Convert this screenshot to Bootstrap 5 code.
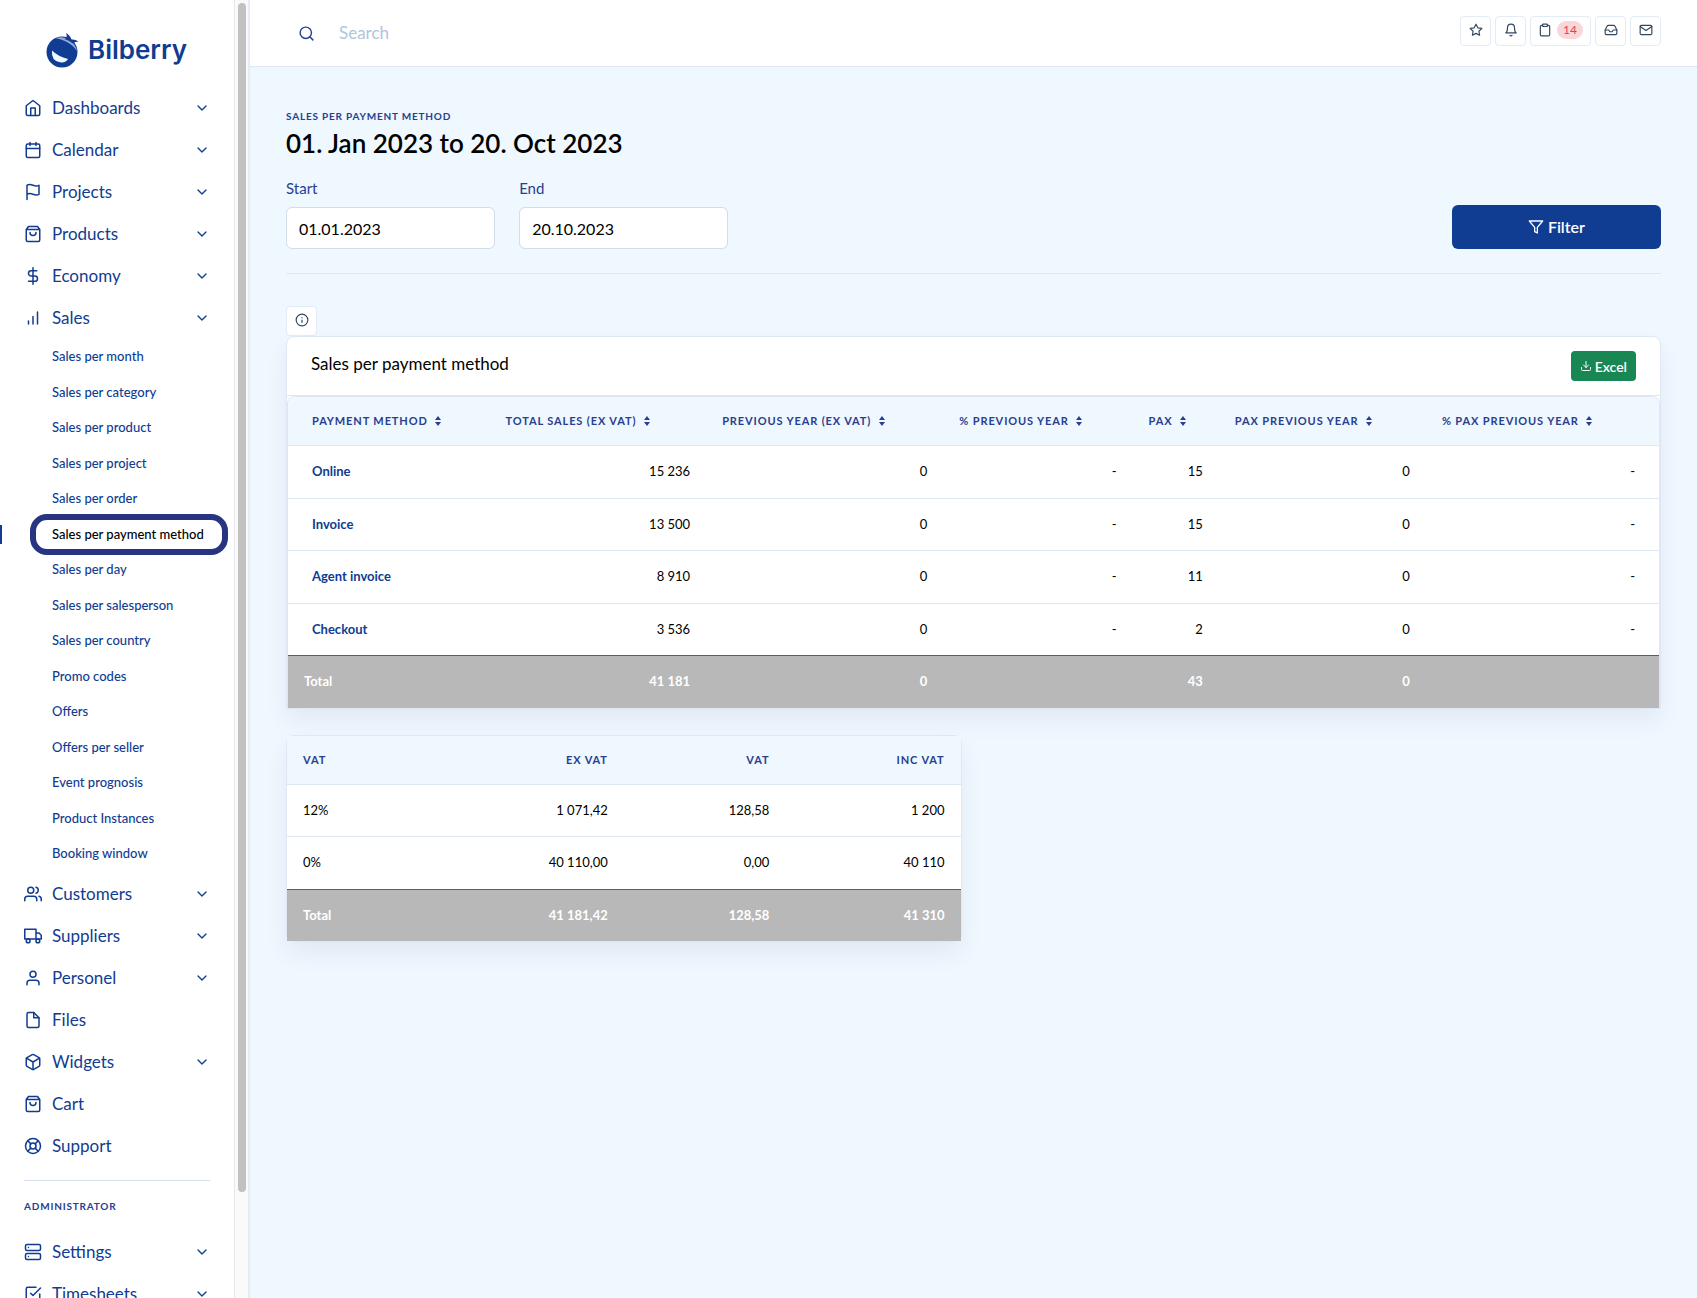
<!DOCTYPE html>
<html lang="en">
<head>
<meta charset="utf-8">
<meta name="viewport" content="width=device-width, initial-scale=1">
<title>Bilberry – Sales per payment method</title>
<link href="https://cdn.jsdelivr.net/npm/bootstrap@5.3.0/dist/css/bootstrap.min.css" rel="stylesheet">
<style>
:root{--navy:#103c91;--indigo:#283e8f;--line:#dfe7f5;--sky:#eff7ff}
body{font-family:Lato,"Noto Sans",sans-serif;font-size:14px;line-height:1.25;color:#000;background:var(--sky)}
a{text-decoration:none}
svg{fill:none;stroke:currentColor;stroke-width:2;stroke-linecap:round;stroke-linejoin:round;flex:none}
.side-wrap{width:250px;background:#fff;border-right:2px solid #e6ebf4}
.side-menu{padding:22px 24px 0;color:var(--navy)}
.scroll-track{width:14px;padding:3px 2px 3px 3px;background:#fafafa;border-left:1px solid #e8e8e8}
.scroll-thumb{width:8px;height:92%;border-radius:4px;background:#c1c1c1}
.brand{height:56px;gap:8px;padding-left:22px;font-family:Inter,Lato,sans-serif;font-size:26px;line-height:32px;font-weight:600;color:var(--navy);margin-bottom:9px}
.menu-link{height:42px;font-size:17px;line-height:24px;color:var(--navy);gap:10px}
.menu-link .chev{margin-left:auto}
.sub-menu{padding-bottom:1px}
.sub-link{display:block;padding:8px 0 8px 28px;font-size:13px;line-height:1.5;font-weight:500;color:var(--navy);white-space:nowrap}
.sub-link.active{position:relative;color:#000}
.sub-link.active::before{content:"";position:absolute;left:-24px;top:8px;width:2px;height:19px;background:var(--navy)}
.sub-link.active::after{content:"";position:absolute;left:6px;right:-18px;top:-3px;bottom:-3px;border:6px solid #263482;border-radius:17px}
.side-menu hr{margin:13px 0 16px;border-color:#d5e0f0;opacity:1}
.caps{font-size:10px;line-height:18px;font-weight:700;letter-spacing:.08em;text-transform:uppercase;color:var(--indigo)}
.topbar{height:67px;padding:0 36px;background:#fff;border-bottom:1px solid var(--line)}
.search-label{color:var(--indigo);margin-right:22px}
.search-box{border:0;outline:0;font-size:17px;line-height:24px;width:320px;background:transparent}
.search-box::placeholder{color:#b1c4de;opacity:1}
.btn-tool{height:30px;min-width:31px;padding:0 7px 3px;border:1px solid #e3ebf6;border-radius:4px;background:#fff;color:#31475f;display:inline-flex;align-items:center;justify-content:center;gap:5px}
.count-pill{padding:0 6px;font-size:12px;line-height:18px;border-radius:9px;background:#f8d6d9;color:#e63f4e}
.content-area{padding:40px 36px}
h1{font-size:26px;line-height:36px;font-weight:600;margin:0 0 17px}
.form-label{font-size:15px;line-height:20px;margin-bottom:9px;color:var(--indigo)}
.form-control{height:42px;padding:0 12px;font-size:16px;border-color:#d2ddec;color:#000}
.btn-filter{height:44px;background:var(--navy);color:#fff;font-size:16px;font-weight:600}
.btn-filter:hover{background:#0c3078;color:#fff}
.content-area hr{margin:24px 0 32px;border-color:var(--line);opacity:1}
.btn-excel{height:30px;padding:0 8px;background:#198754;color:#fff;font-size:14px;font-weight:600;border-radius:4px;gap:3px}
.btn-excel:hover{background:#146c43;color:#fff}
.panel{border:1px solid var(--line);border-radius:8px;background:#fff;box-shadow:0 12px 24px rgba(18,38,63,.06)}
.panel-head{height:59px;padding:0 24px;border-bottom:1px solid var(--line)}
.panel-head h2{font-size:17px;line-height:24px;font-weight:400;margin:0 0 4px}
.sheet{margin:0;table-layout:fixed;width:100%;font-size:13px;line-height:1.5;--bs-table-bg:transparent;--bs-table-color:#000}
.sheet .caps{font-size:11px}
.sheet>thead th{padding:15px 16px;background:var(--sky);border-bottom:1px solid var(--line);white-space:nowrap}
.sheet>tbody td{padding:16px;border-bottom:1px solid var(--line)}
.sheet>tbody tr:last-child td{border-bottom-color:#466089}
.sheet>tfoot td{padding:16px;background:#b8b8b8;color:#fff;font-weight:700;border:0}
.sheet a{font-weight:700;color:var(--navy)}
.sheet .sorter{fill:currentColor;stroke:none;margin-left:4px;vertical-align:-1px}
.main-panel .sheet th:first-child,.main-panel .sheet tbody td:first-child{padding-left:24px}
.main-panel .sheet td:last-child{padding-right:24px}
.main-panel .table-holder{border:1px solid var(--line);border-width:1px 1px 0;border-radius:8px 8px 0 0;overflow:hidden}
.main-panel{border-radius:8px 8px 0 0;margin-bottom:26px}
</style>
</head>
<body>
<svg class="d-none">
<symbol id="chev" viewBox="0 0 24 24"><path d="M6 9l6 6 6-6"/></symbol>
<symbol id="home" viewBox="0 0 24 24"><path d="M3 9l9-7 9 7v11a2 2 0 0 1-2 2H5a2 2 0 0 1-2-2z"/><path d="M9 22V12h6v10"/></symbol>
<symbol id="calendar" viewBox="0 0 24 24"><rect x="3" y="4" width="18" height="18" rx="2"/><path d="M16 2v4M8 2v4M3 10h18"/></symbol>
<symbol id="flag" viewBox="0 0 24 24"><path d="M4 15s1-1 4-1 5 2 8 2 4-1 4-1V3s-1 1-4 1-5-2-8-2-4 1-4 1zM4 22v-7"/></symbol>
<symbol id="bag" viewBox="0 0 24 24"><path d="M6 2L3 6v14a2 2 0 0 0 2 2h14a2 2 0 0 0 2-2V6l-3-4zM3 6h18M16 10a4 4 0 0 1-8 0"/></symbol>
<symbol id="dollar" viewBox="0 0 24 24"><path d="M12 1v22M17 5H9.500a3.500 3.500 0 0 0 0 7h5a3.500 3.500 0 0 1 0 7H6"/></symbol>
<symbol id="bars" viewBox="0 0 24 24"><path d="M12 20V10M18 20V4M6 20v-4"/></symbol>
<symbol id="users" viewBox="0 0 24 24"><path d="M17 21v-2a4 4 0 0 0-4-4H5a4 4 0 0 0-4 4v2"/><circle cx="9" cy="7" r="4"/><path d="M23 21v-2a4 4 0 0 0-3-3.870M16 3.130a4 4 0 0 1 0 7.750"/></symbol>
<symbol id="truck" viewBox="0 0 24 24"><path d="M1 3h15v13H1zM16 8h4l3 3v5h-7z"/><circle cx="5.500" cy="18.500" r="2.500"/><circle cx="18.500" cy="18.500" r="2.500"/></symbol>
<symbol id="user" viewBox="0 0 24 24"><path d="M20 21v-2a4 4 0 0 0-4-4H8a4 4 0 0 0-4 4v2"/><circle cx="12" cy="7" r="4"/></symbol>
<symbol id="file" viewBox="0 0 24 24"><path d="M13 2H6a2 2 0 0 0-2 2v16a2 2 0 0 0 2 2h12a2 2 0 0 0 2-2V9z"/><path d="M13 2v7h7"/></symbol>
<symbol id="box" viewBox="0 0 24 24"><path d="M21 16V8a2 2 0 0 0-1-1.730l-7-4a2 2 0 0 0-2 0l-7 4A2 2 0 0 0 3 8v8a2 2 0 0 0 1 1.730l7 4a2 2 0 0 0 2 0l7-4A2 2 0 0 0 21 16z"/><path d="M3.270 6.960L12 12.010l8.730-5.050M12 22.080V12"/></symbol>
<symbol id="buoy" viewBox="0 0 24 24"><circle cx="12" cy="12" r="10"/><circle cx="12" cy="12" r="4"/><path d="M4.930 4.930l4.240 4.240M14.830 14.830l4.240 4.240M14.830 9.170l4.240-4.240M4.930 19.070l4.240-4.240"/></symbol>
<symbol id="server" viewBox="0 0 24 24"><rect x="2" y="2" width="20" height="8" rx="2"/><rect x="2" y="14" width="20" height="8" rx="2"/><path d="M6 6h.010M6 18h.010"/></symbol>
<symbol id="check" viewBox="0 0 24 24"><path d="M9 11l3 3L22 4"/><path d="M21 12v7a2 2 0 0 1-2 2H5a2 2 0 0 1-2-2V5a2 2 0 0 1 2-2h11"/></symbol>
<symbol id="search" viewBox="0 0 24 24"><circle cx="11" cy="11" r="8"/><path d="M21 21l-4.350-4.350"/></symbol>
<symbol id="star" viewBox="0 0 24 24"><path d="M12 2l3.090 6.260L22 9.270l-5 4.870 1.180 6.880L12 17.770l-6.180 3.250L7 14.140 2 9.270l6.910-1.010z"/></symbol>
<symbol id="bell" viewBox="0 0 24 24"><path d="M18 8A6 6 0 0 0 6 8c0 7-3 9-3 9h18s-3-2-3-9M13.730 21a2 2 0 0 1-3.460 0"/></symbol>
<symbol id="clip" viewBox="0 0 24 24"><path d="M16 4h2a2 2 0 0 1 2 2v14a2 2 0 0 1-2 2H6a2 2 0 0 1-2-2V6a2 2 0 0 1 2-2h2"/><rect x="8" y="2" width="8" height="4" rx="1"/></symbol>
<symbol id="inbox" viewBox="0 0 24 24"><path d="M22 12h-6l-2 3h-4l-2-3H2"/><path d="M5.450 5.110L2 12v6a2 2 0 0 0 2 2h16a2 2 0 0 0 2-2v-6l-3.450-6.890A2 2 0 0 0 16.760 4H7.240a2 2 0 0 0-1.790 1.110z"/></symbol>
<symbol id="mail" viewBox="0 0 24 24"><rect x="2" y="4" width="20" height="16" rx="2"/><path d="M22 6l-10 7L2 6"/></symbol>
<symbol id="filter" viewBox="0 0 24 24"><path d="M22 3H2l8 9.460V19l4 2v-8.540z"/></symbol>
<symbol id="info" viewBox="0 0 24 24"><circle cx="12" cy="12" r="10"/><path d="M12 16v-4M12 8h.010"/></symbol>
<symbol id="download" viewBox="0 0 24 24"><path d="M21 15v4a2 2 0 0 1-2 2H5a2 2 0 0 1-2-2v-4M7 10l5 5 5-5M12 15V3"/></symbol>
<symbol id="sort" viewBox="0 0 6 10"><path d="M3 0l3 4H0zM3 10L0 6h6z"/></symbol>
</svg>
<div class="d-flex vh-100 overflow-hidden">
<aside class="side-wrap d-flex flex-shrink-0">
<nav class="side-menu flex-grow-1 overflow-hidden" aria-label="Main">
<a class="brand d-flex align-items-center" href="#"><svg width="34" height="36" viewBox="0 0 34 36"><g stroke="none"><circle cx="16" cy="20" r="15.500" fill="#103c91"/><path d="M10 6.200Q17 3.500 24 8.500Q30 13 31 19Q27 13 20 9.500Q15 7 10 6.200z" fill="#93a9dc"/><path d="M6 18.500Q5 29 14 30.300Q20 31 22 27Q12 24.500 6 18.500z" fill="#eff7ff"/><path d="M20 1Q24 3 25.500 7.500Q29 7 32.500 9.500Q29 9.500 27 11.500Q24 9 18.500 7Q22 6 20 1z" fill="#103c91"/></g></svg>Bilberry</a>
<a class="menu-link d-flex align-items-center" href="#"><svg width="18" height="18"><use href="#home"/></svg>Dashboards<svg class="chev" width="16" height="16"><use href="#chev"/></svg></a>
<a class="menu-link d-flex align-items-center" href="#"><svg width="18" height="18"><use href="#calendar"/></svg>Calendar<svg class="chev" width="16" height="16"><use href="#chev"/></svg></a>
<a class="menu-link d-flex align-items-center" href="#"><svg width="18" height="18"><use href="#flag"/></svg>Projects<svg class="chev" width="16" height="16"><use href="#chev"/></svg></a>
<a class="menu-link d-flex align-items-center" href="#"><svg width="18" height="18"><use href="#bag"/></svg>Products<svg class="chev" width="16" height="16"><use href="#chev"/></svg></a>
<a class="menu-link d-flex align-items-center" href="#"><svg width="18" height="18"><use href="#dollar"/></svg>Economy<svg class="chev" width="16" height="16"><use href="#chev"/></svg></a>
<a class="menu-link d-flex align-items-center" href="#"><svg width="18" height="18"><use href="#bars"/></svg>Sales<svg class="chev" width="16" height="16"><use href="#chev"/></svg></a>
<ul class="sub-menu list-unstyled mb-0">
<li><a class="sub-link" href="#">Sales per month</a></li>
<li><a class="sub-link" href="#">Sales per category</a></li>
<li><a class="sub-link" href="#">Sales per product</a></li>
<li><a class="sub-link" href="#">Sales per project</a></li>
<li><a class="sub-link" href="#">Sales per order</a></li>
<li><a class="sub-link active" href="#" aria-current="page">Sales per payment method</a></li>
<li><a class="sub-link" href="#">Sales per day</a></li>
<li><a class="sub-link" href="#">Sales per salesperson</a></li>
<li><a class="sub-link" href="#">Sales per country</a></li>
<li><a class="sub-link" href="#">Promo codes</a></li>
<li><a class="sub-link" href="#">Offers</a></li>
<li><a class="sub-link" href="#">Offers per seller</a></li>
<li><a class="sub-link" href="#">Event prognosis</a></li>
<li><a class="sub-link" href="#">Product Instances</a></li>
<li><a class="sub-link" href="#">Booking window</a></li>
</ul>
<a class="menu-link d-flex align-items-center" href="#"><svg width="18" height="18"><use href="#users"/></svg>Customers<svg class="chev" width="16" height="16"><use href="#chev"/></svg></a>
<a class="menu-link d-flex align-items-center" href="#"><svg width="18" height="18"><use href="#truck"/></svg>Suppliers<svg class="chev" width="16" height="16"><use href="#chev"/></svg></a>
<a class="menu-link d-flex align-items-center" href="#"><svg width="18" height="18"><use href="#user"/></svg>Personel<svg class="chev" width="16" height="16"><use href="#chev"/></svg></a>
<a class="menu-link d-flex align-items-center" href="#"><svg width="18" height="18"><use href="#file"/></svg>Files</a>
<a class="menu-link d-flex align-items-center" href="#"><svg width="18" height="18"><use href="#box"/></svg>Widgets<svg class="chev" width="16" height="16"><use href="#chev"/></svg></a>
<a class="menu-link d-flex align-items-center" href="#"><svg width="18" height="18"><use href="#bag"/></svg>Cart</a>
<a class="menu-link d-flex align-items-center" href="#"><svg width="18" height="18"><use href="#buoy"/></svg>Support</a>
<hr>
<div class="caps mb-3">Administrator</div>
<a class="menu-link d-flex align-items-center" href="#"><svg width="18" height="18"><use href="#server"/></svg>Settings<svg class="chev" width="16" height="16"><use href="#chev"/></svg></a>
<a class="menu-link d-flex align-items-center" href="#"><svg width="18" height="18"><use href="#check"/></svg>Timesheets<svg class="chev" width="16" height="16"><use href="#chev"/></svg></a>
</nav>
<div class="scroll-track flex-shrink-0"><div class="scroll-thumb"></div></div>
</aside>
<div class="flex-grow-1 overflow-hidden">
<header class="topbar d-flex align-items-center justify-content-between">
<div class="d-flex align-items-center ps-2"><label class="search-label d-flex ps-1" for="q" aria-label="Search"><svg width="17" height="17"><use href="#search"/></svg></label><input class="search-box" id="q" type="search" placeholder="Search"></div>
<div class="d-flex gap-1 pb-1">
<button class="btn-tool" type="button" aria-label="Favourites"><svg width="14" height="14"><use href="#star"/></svg></button>
<button class="btn-tool" type="button" aria-label="Notifications"><svg width="14" height="14"><use href="#bell"/></svg></button>
<button class="btn-tool" type="button" aria-label="Tasks"><svg width="14" height="14"><use href="#clip"/></svg><span class="count-pill">14</span></button>
<button class="btn-tool" type="button" aria-label="Inbox"><svg width="14" height="14"><use href="#inbox"/></svg></button>
<button class="btn-tool" type="button" aria-label="Mail"><svg width="14" height="14"><use href="#mail"/></svg></button>
</div>
</header>
<main class="content-area">
<div class="caps">Sales per payment method</div>
<h1>01. Jan 2023 to 20. Oct 2023</h1>
<form class="row align-items-end">
<div class="col-2"><label class="form-label" for="start">Start</label><input class="form-control" id="start" type="text" value="01.01.2023"></div>
<div class="col-2"><label class="form-label" for="end">End</label><input class="form-control" id="end" type="text" value="20.10.2023"></div>
<div class="col-2 ms-auto"><button class="btn btn-filter w-100 d-flex align-items-center justify-content-center gap-1" type="button"><svg width="16" height="16"><use href="#filter"/></svg>Filter</button></div>
</form>
<hr>
<button class="btn-tool d-flex" type="button" aria-label="Information"><svg width="14" height="14"><use href="#info"/></svg></button>
<section class="panel main-panel">
<div class="panel-head d-flex align-items-center justify-content-between"><h2>Sales per payment method</h2><button class="btn btn-excel d-flex align-items-center" type="button"><svg width="12" height="12"><use href="#download"/></svg>Excel</button></div>
<div class="table-holder">
<table class="table sheet">
<colgroup><col style="width:14.7%"><col style="width:15.8%"><col style="width:17.3%"><col style="width:13.8%"><col style="width:6.3%"><col style="width:15.1%"><col style="width:17%"></colgroup>
<thead><tr class="caps"><th>Payment method <svg class="sorter" width="6" height="10"><use href="#sort"/></svg></th><th>Total sales (ex VAT) <svg class="sorter" width="6" height="10"><use href="#sort"/></svg></th><th>Previous year (ex VAT) <svg class="sorter" width="6" height="10"><use href="#sort"/></svg></th><th>% previous year <svg class="sorter" width="6" height="10"><use href="#sort"/></svg></th><th>Pax <svg class="sorter" width="6" height="10"><use href="#sort"/></svg></th><th>Pax previous year <svg class="sorter" width="6" height="10"><use href="#sort"/></svg></th><th>% pax previous year <svg class="sorter" width="6" height="10"><use href="#sort"/></svg></th></tr></thead>
<tbody class="text-end">
<tr><td class="text-start"><a href="#">Online</a></td><td>15 236</td><td>0</td><td>-</td><td>15</td><td>0</td><td>-</td></tr>
<tr><td class="text-start"><a href="#">Invoice</a></td><td>13 500</td><td>0</td><td>-</td><td>15</td><td>0</td><td>-</td></tr>
<tr><td class="text-start"><a href="#">Agent invoice</a></td><td>8 910</td><td>0</td><td>-</td><td>11</td><td>0</td><td>-</td></tr>
<tr><td class="text-start"><a href="#">Checkout</a></td><td>3 536</td><td>0</td><td>-</td><td>2</td><td>0</td><td>-</td></tr>
</tbody>
<tfoot class="text-end"><tr><td class="text-start">Total</td><td>41 181</td><td>0</td><td></td><td>43</td><td>0</td><td></td></tr></tfoot>
</table>
</div>
</section>
<div class="row"><div class="col-6"><section class="panel">
<table class="table sheet">
<colgroup><col style="width:25%"><col style="width:25%"><col style="width:24%"><col style="width:26%"></colgroup>
<thead><tr class="caps"><th>VAT</th><th class="text-end">Ex VAT</th><th class="text-end">VAT</th><th class="text-end">Inc VAT</th></tr></thead>
<tbody class="text-end">
<tr><td class="text-start">12%</td><td>1 071,42</td><td>128,58</td><td>1 200</td></tr>
<tr><td class="text-start">0%</td><td>40 110,00</td><td>0,00</td><td>40 110</td></tr>
</tbody>
<tfoot class="text-end"><tr><td class="text-start">Total</td><td>41 181,42</td><td>128,58</td><td>41 310</td></tr></tfoot>
</table>
</section></div></div>
</main>
</div>
</div>
<script src="https://cdn.jsdelivr.net/npm/bootstrap@5.3.0/dist/js/bootstrap.bundle.min.js"></script>
</body>
</html>
